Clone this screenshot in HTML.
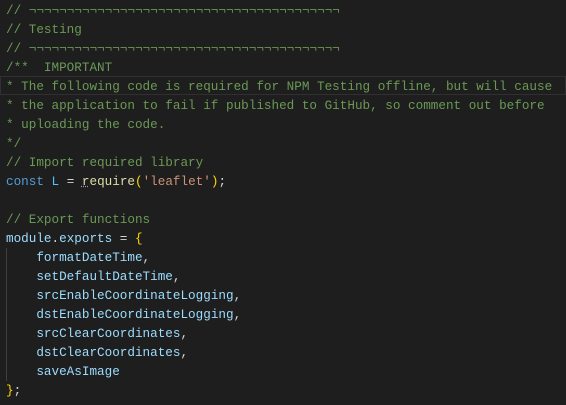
<!DOCTYPE html>
<html><head><meta charset="utf-8"><style>
html,body{margin:0;padding:0;background:#1e1e1e;width:566px;height:405px;overflow:hidden}
pre{margin:0;padding:1px 0 0 6px;font-family:"Liberation Mono",monospace;font-size:12.65px;line-height:19px;color:#d4d4d4;position:relative}
.c{color:#6a9955}.k{color:#569cd6}.v{color:#4fc1ff}.f{color:#dcdcaa}.p{color:#ffd700}.s{color:#ce9178}.m{color:#9cdcfe}
.hl{position:absolute;left:0;right:0;top:76px;height:17px;border:1px solid #303030}
.g{position:absolute;left:6px;top:248px;height:133px;border-left:1px solid #404040}
.u{text-decoration:underline dotted #999}
</style></head><body><pre><div class="hl"></div><div class="g"></div><span class="c">// ¬¬¬¬¬¬¬¬¬¬¬¬¬¬¬¬¬¬¬¬¬¬¬¬¬¬¬¬¬¬¬¬¬¬¬¬¬¬¬¬¬
// Testing
// ¬¬¬¬¬¬¬¬¬¬¬¬¬¬¬¬¬¬¬¬¬¬¬¬¬¬¬¬¬¬¬¬¬¬¬¬¬¬¬¬¬
/**  IMPORTANT
* The following code is required for NPM Testing offline, but will cause
* the application to fail if published to GitHub, so comment out before
* uploading the code.
*/
// Import required library</span>
<span class="k">const</span> <span class="v">L</span> = <span class="f"><span class="u">r</span>equire</span><span class="p">(</span><span class="s">'leaflet'</span><span class="p">)</span>;

<span class="c">// Export functions</span>
<span class="m">module</span>.<span class="m">exports</span> = <span class="p">{</span>
    <span class="m">formatDateTime</span>,
    <span class="m">setDefaultDateTime</span>,
    <span class="m">srcEnableCoordinateLogging</span>,
    <span class="m">dstEnableCoordinateLogging</span>,
    <span class="m">srcClearCoordinates</span>,
    <span class="m">dstClearCoordinates</span>,
    <span class="m">saveAsImage</span>
<span class="p">}</span>;
</pre></body></html>
